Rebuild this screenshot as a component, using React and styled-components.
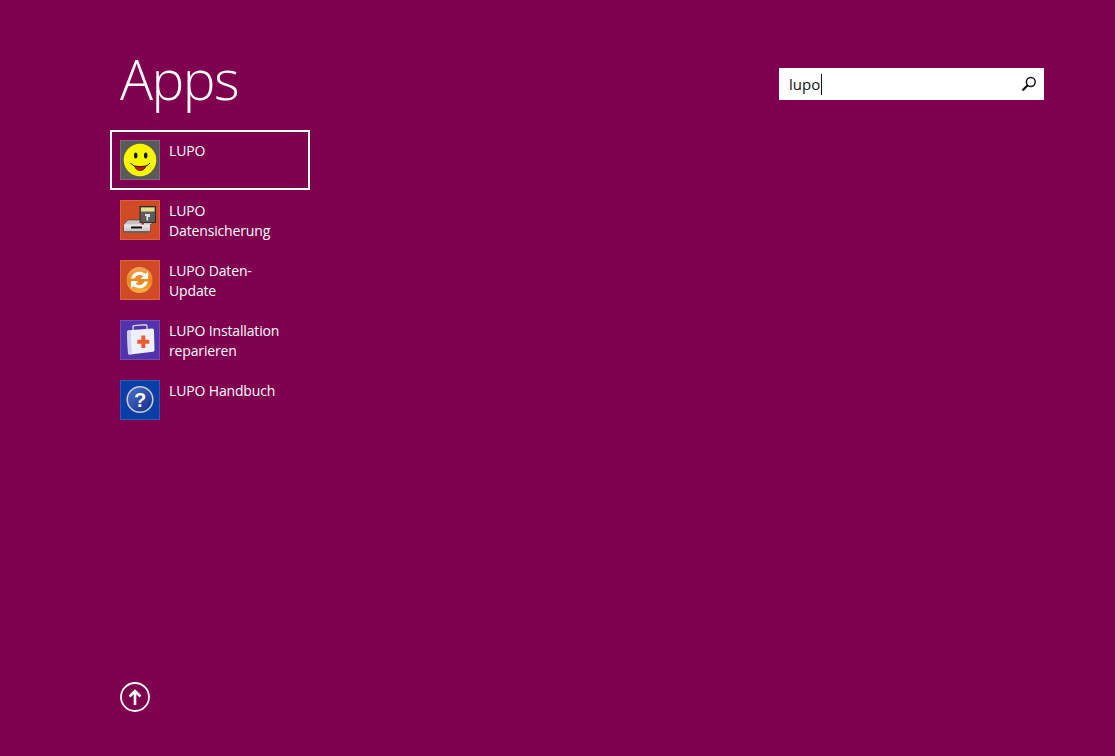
import React from "react";
import styled, { createGlobalStyle } from "styled-components";

const GlobalStyle = createGlobalStyle`
  html, body {
    margin: 0;
    padding: 0;
    height: 100%;
    background: #800050;
  }
`;

const Page = styled.div`
  display: flex;
  flex-direction: column;
  height: 756px;
  overflow: hidden;
  box-sizing: border-box;
  padding: 0 71px 44px 110px;
  color: #fff;
  font-family: "Open Sans", "Noto Sans", sans-serif;
`;

const Header = styled.header`
  display: flex;
  align-items: flex-start;
  justify-content: space-between;
  height: 130px;
`;

const Title = styled.h1`
  margin: 42px 0 0 10px;
  font-size: 55px;
  line-height: 74px;
  font-weight: 300;
  letter-spacing: -1.5px;
`;

const SearchBox = styled.div`
  display: flex;
  align-items: center;
  justify-content: space-between;
  width: 265px;
  height: 32px;
  margin-top: 68px;
  padding: 0 7px 0 10px;
  box-sizing: border-box;
  background: #fff;
  color: #111;
  font-size: 15px;
`;

const Caret = styled.span`
  display: inline-block;
  width: 1px;
  height: 21px;
  margin-left: 1px;
  background: #111;
  vertical-align: -5px;
`;

const List = styled.ul`
  display: flex;
  flex-direction: column;
  flex: 1;
  width: 200px;
  margin: 0;
  padding: 0;
  list-style: none;
`;

const Item = styled.li`
  display: flex;
  gap: 9px;
  height: 60px;
  box-sizing: border-box;
  padding: ${({ $selected }) => ($selected ? "8px" : "10px")};
  border: ${({ $selected }) => ($selected ? "2px solid #fff" : "none")};
`;

const Tile = styled.div`
  flex: none;
  width: 40px;
  height: 40px;
  box-sizing: border-box;
  border: 1px solid rgba(255, 255, 255, 0.14);
  background: ${({ $color }) => $color};
`;

const Label = styled.div`
  font-size: 14px;
  letter-spacing: -0.15px;
  line-height: 20px;
  margin-top: 1px;
  width: 118px;
`;

const UpButton = styled.button`
  display: flex;
  width: 30px;
  height: 30px;
  margin-left: 10px;
  padding: 0;
  border: 0;
  background: none;
`;

const Smiley = () => (
  <svg viewBox="0 0 38 38" width="38" height="38">
    <circle cx="19" cy="19" r="16.3" fill="#f6f600" />
    <ellipse cx="14.7" cy="14.5" rx="1.7" ry="3" fill="#111" />
    <ellipse cx="24.7" cy="14.5" rx="1.7" ry="3" fill="#111" />
    <path d="M13.5 25 Q19 26.5 25 25 Q23.5 29.5 19.2 29.5 Q15 29.5 13.5 25Z" fill="#e01010" />
    <path d="M9.5 22 Q11 24 13.5 25 Q19 26.5 25 25 Q27.5 24 29 22" fill="none" stroke="#111" strokeWidth="1" />
    <path d="M13.5 25 Q15 29.5 19.2 29.5 Q23.5 29.5 25 25" fill="none" stroke="#111" strokeWidth="0.7" />
  </svg>
);

const Backup = () => (
  <svg viewBox="0 0 38 38" width="38" height="38">
    <defs>
      <linearGradient id="driveFace" x1="0" y1="0" x2="0" y2="1">
        <stop offset="0" stopColor="#eeeeee" />
        <stop offset="1" stopColor="#bdbdbd" />
      </linearGradient>
    </defs>
    <path d="M3 23 L7 19 H31 L33 21 L29 24 V31 H3 Z" fill="#c4c4c4" stroke="#444" strokeWidth="0.6" />
    <rect x="3" y="23.5" width="26" height="7.5" fill="url(#driveFace)" />
    <rect x="10" y="25.5" width="11" height="2" fill="#111" />
    <rect x="3" y="30" width="26" height="1.6" fill="#666" />
    <rect x="19" y="5.5" width="15.5" height="16" fill="#5c5c5c" stroke="#1c1c1c" strokeWidth="0.8" />
    <rect x="20" y="6.5" width="13.5" height="4" fill="#e6de8c" />
    <path d="M24 13 H29 V16 H27.2 V19.5 H25.4 V15 H24Z" fill="#ddd" />
    <rect x="20.5" y="21.5" width="2.5" height="2" fill="#c82020" />
  </svg>
);

const Refresh = () => (
  <svg viewBox="0 0 38 38" width="38" height="38">
    <defs>
      <linearGradient id="orangeBall" x1="0" y1="0" x2="0" y2="1">
        <stop offset="0" stopColor="#f2a45a" />
        <stop offset="0.55" stopColor="#e9841c" />
        <stop offset="1" stopColor="#f5b542" />
      </linearGradient>
    </defs>
    <circle cx="18.5" cy="19" r="13" fill="url(#orangeBall)" />
    <path d="M10 17.5 A8.8 8.8 0 0 1 24.5 13 L27 10.5 V18 H19.5 L22.3 15.2 A5.6 5.6 0 0 0 13.5 17.5 Z" fill="#fff" />
    <path d="M27 20.5 A8.8 8.8 0 0 1 12.5 25 L10 27.5 V20 H17.5 L14.7 22.8 A5.6 5.6 0 0 0 23.5 20.5 Z" fill="#fff" />
  </svg>
);

const FirstAid = () => (
  <svg viewBox="0 0 38 38" width="38" height="38">
    <path d="M12 9 V6 Q12 4.5 14 4.5 L24 3.8 Q26 3.8 26 5.5 V8" fill="none" stroke="#c9c9e8" strokeWidth="1.5" />
    <path d="M6 11 Q6 9.5 8 9.3 L31 7.5 Q33 7.5 33 9 L33.5 29 Q33.5 30.5 32 30.7 L9 33.5 Q7 33.5 7 32 Z" fill="#eef0fb" />
    <path d="M6 11 L7 32 Q7 33.5 9 33.5 L11 33.2 L9.5 9.2 L8 9.3 Q6 9.5 6 11Z" fill="#cfd1ee" />
    <path d="M20.3 14.5 H24.3 V18.7 H28.3 V22.7 H24.3 V27 H20.3 V22.7 H16.3 V18.7 H20.3 Z" fill="#ee5a34" />
  </svg>
);

const Help = () => (
  <svg viewBox="0 0 38 38" width="38" height="38">
    <defs>
      <linearGradient id="blueBall" x1="0" y1="0" x2="1" y2="1">
        <stop offset="0" stopColor="#4f72cc" />
        <stop offset="1" stopColor="#10298a" />
      </linearGradient>
    </defs>
    <circle cx="19" cy="18.5" r="12.8" fill="url(#blueBall)" stroke="#c6ccd6" strokeWidth="1.6" />
    <text x="19" y="25.5" textAnchor="middle" fontFamily="Liberation Sans, sans-serif" fontSize="20" fontWeight="700" fill="#fff">?</text>
  </svg>
);

const SearchIcon = () => (
  <svg viewBox="0 0 16 16" width="16" height="16">
    <circle cx="9.8" cy="6" r="4.4" fill="none" stroke="#111" strokeWidth="1.5" />
    <path d="M6.6 9.2 L1.5 14.5" stroke="#111" strokeWidth="2.2" />
  </svg>
);

const ArrowUp = () => (
  <svg viewBox="0 0 30 30" width="30" height="30">
    <circle cx="15" cy="15" r="14" fill="none" stroke="#fff" strokeWidth="1.8" />
    <path d="M15 23 V9.5 M9.5 14.5 L15 9 L20.5 14.5" fill="none" stroke="#fff" strokeWidth="2.6" />
  </svg>
);

const APPS = [
  { name: "LUPO", color: "#5a5a5a", icon: <Smiley />, selected: true },
  { name: "LUPO Datensicherung", color: "#d04a25", icon: <Backup /> },
  { name: "LUPO Daten-Update", color: "#d04a25", icon: <Refresh /> },
  { name: "LUPO Installation reparieren", color: "#5133ab", icon: <FirstAid /> },
  { name: "LUPO Handbuch", color: "#0a3fa8", icon: <Help /> },
];

export default function App() {
  return (
    <Page>
      <GlobalStyle />
      <Header>
        <Title>Apps</Title>
        <SearchBox>
          <span>
            lupo
            <Caret />
          </span>
          <SearchIcon />
        </SearchBox>
      </Header>
      <List>
        {APPS.map((app) => (
          <Item key={app.name} $selected={app.selected}>
            <Tile $color={app.color}>{app.icon}</Tile>
            <Label>{app.name}</Label>
          </Item>
        ))}
      </List>
      <UpButton aria-label="Nach oben">
        <ArrowUp />
      </UpButton>
    </Page>
  );
}
